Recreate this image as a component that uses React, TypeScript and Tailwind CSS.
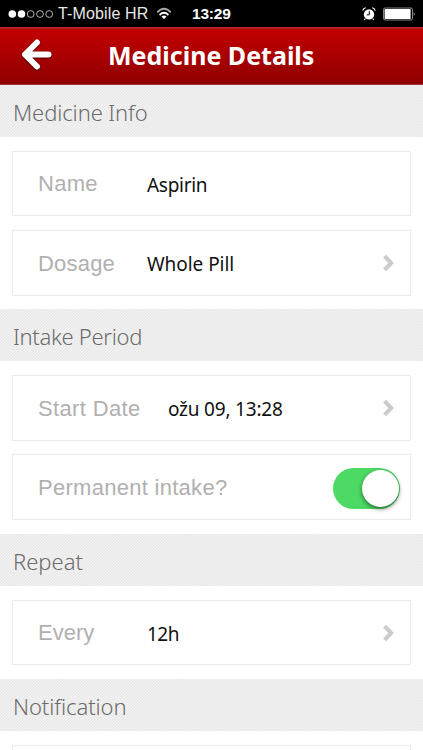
import type { ReactNode } from "react";

function Section({ title, className }: { title: string; className: string }) {
  return (
    <h2
      className={`h-[52px] w-full shrink-0 bg-[repeating-linear-gradient(135deg,#e8e8e8_0px,#ebebeb_0.7px,#f5f5f5_1.4px,#e8e8e8_2.12px)] pt-[11px] pl-[13px] font-['Noto_Sans',sans-serif] text-[22px] leading-[32px] font-light whitespace-nowrap text-[#6c6c6c] ${className}`}
    >
      {title}
    </h2>
  );
}

function Chevron() {
  return (
    <svg className="mr-[16px] ml-auto h-[18px] w-[12px]" viewBox="0 0 12 18" fill="none" stroke="#cbcbcb" strokeWidth="4">
      <path d="M2.600 2.200 9.200 9 2.600 15.800" />
    </svg>
  );
}

function Row({ label, labelClass, value, valueClass = "", className = "", children }: {
  label: string;
  labelClass: string;
  value?: string;
  valueClass?: string;
  className?: string;
  children?: ReactNode;
}) {
  return (
    <div className={`mx-3 flex shrink-0 items-center border border-[#ebebeb] bg-white pl-[25px] ${className}`}>
      <span className={`shrink-0 pt-px font-['Liberation_Sans',sans-serif] text-[22px] leading-[26px] whitespace-nowrap text-[#b0b0b0] ${labelClass}`}>{label}</span>
      {value && (
        <span className={`pt-[2px] font-['Noto_Sans',sans-serif] text-[19px] leading-[26px] whitespace-nowrap text-[#111] ${valueClass}`}>{value}</span>
      )}
      {children}
    </div>
  );
}

function StatusBar() {
  return (
    <div className="flex h-[27px] w-full shrink-0 items-center bg-black font-['Liberation_Sans',sans-serif] text-white">
      <svg className="ml-[8px] h-[10px] w-[46px]" viewBox="0 0 46 10">
        <circle cx="4.3" cy="5" r="3.8" fill="#fff" />
        <circle cx="13.5" cy="5" r="3.8" fill="#fff" />
        <g fill="none" stroke="#ddd" strokeWidth=".8">
          <circle cx="22.7" cy="5" r="3.4" />
          <circle cx="32" cy="5" r="3.4" />
          <circle cx="41.2" cy="5" r="3.4" />
        </g>
      </svg>
      <span className="ml-[4px] w-[91px] pt-px text-[16px] leading-5 tracking-[0.14px] whitespace-nowrap text-[#e8e8e8]">T-Mobile HR</span>
      <svg className="ml-[7px] h-[13px] w-[16px]" viewBox="0 0 18 13" fill="none" stroke="#fff" preserveAspectRatio="none">
        <path d="M1.4 5.3Q9-1.8 16.6 5.3" strokeWidth="2" stroke="#a9a9a9" />
        <path d="M4 8Q9 3.6 14 8" strokeWidth="2" />
        <path d="M9 12.3 6.2 9.6Q9 7.6 11.8 9.6Z" fill="#fff" stroke="none" />
      </svg>
      <span className="ml-[20px] w-[40px] pt-px text-[15.5px] leading-5 font-bold tracking-[-0.2px] whitespace-nowrap">13:29</span>
      <svg className="ml-auto h-[14px] w-[14px]" viewBox="0 0 14 14" fill="none">
        <circle cx="7" cy="7.4" r="5.2" fill="#fff" />
        <path d="M.8 3.6Q1.3 1.2 3.8.8M10.2.8Q12.700 1.200 13.2 3.6M3.400 11.500 2.200 13M10.600 11.500 11.800 13" stroke="#fff" strokeWidth="1.1" />
        <path d="M7.300 4.200V7.800H4.800" stroke="#000" strokeWidth="1" />
      </svg>
      <svg className="mr-[7px] ml-[6px] h-[14px] w-[34px]" viewBox="0 0 34 14">
        <rect x="1.500" y="1" width="29" height="12" rx="1.500" fill="none" stroke="#aaa" strokeWidth=".8" />
        <rect x="2.600" y="2" width="26" height="10" rx=".5" fill="#fff" />
        <path d="M31.800 4.800Q33.500 7 31.800 9.200Z" fill="#ddd" />
      </svg>
    </div>
  );
}

export default function App() {
  return (
    <main className="flex h-[750px] w-[423px] flex-col overflow-hidden bg-white">
      <StatusBar />
      <header className="flex h-[58px] w-full shrink-0 items-center border-t-2 border-b border-t-[#b52222] border-b-[#a03636] bg-linear-to-b from-[#c30000] to-[#8f0000] pb-[3px]">
        <svg className="ml-[21px] h-[34px] w-[32px] drop-shadow-[0_1px_1px_#500000]" viewBox="0 0 32 34" fill="none" stroke="#fff" strokeWidth="6" strokeLinecap="round" strokeLinejoin="round">
          <path d="M16 4.500 4 16.500 16 28.500M5 16.500H27.500" />
        </svg>
        <h1 className="ml-[55px] font-['Noto_Sans',sans-serif] text-[25px] leading-[34px] font-bold whitespace-nowrap text-white">Medicine Details</h1>
      </header>
      <Section title="Medicine Info" className="tracking-[-0.1px]" />
      <Row className="mt-[14px] h-[65px]" label="Name" labelClass="w-[109px] tracking-[0.3px]" value="Aspirin" valueClass="tracking-[-0.3px]" />
      <Row className="mt-[14px] h-[66px]" label="Dosage" labelClass="w-[109px] tracking-[0.2px]" value="Whole Pill" valueClass="tracking-[-0.05px]"><Chevron /></Row>
      <Section title="Intake Period" className="mt-[13px] tracking-[-0.3px]" />
      <Row className="mt-[14px] h-[66px]" label="Start Date" labelClass="w-[130px] tracking-[0.35px]" value="ožu 09, 13:28" valueClass="tracking-[-0.2px]"><Chevron /></Row>
      <Row className="mt-[13px] h-[66px]" label="Permanent intake?" labelClass="w-[200px] tracking-[0.28px]">
        <div className="mt-[3px] mr-[10px] ml-auto flex h-[41px] w-[67px] items-center justify-end rounded-full bg-[#4cd964] pr-[1.500px]">
          <span className="size-[37px] rounded-full bg-white shadow-[0_2px_4px_rgba(0,0,0,0.5)]" />
        </div>
      </Row>
      <Section title="Repeat" className="mt-[14px]" />
      <Row className="mt-[14px] h-[65px]" label="Every" labelClass="w-[109px]" value="12h" valueClass="tracking-[-0.5px]"><Chevron /></Row>
      <Section title="Notification" className="mt-[14px] tracking-[-0.08px]" />
      <Row className="mt-[14px] h-[65px]" label="" labelClass="" />
    </main>
  );
}
